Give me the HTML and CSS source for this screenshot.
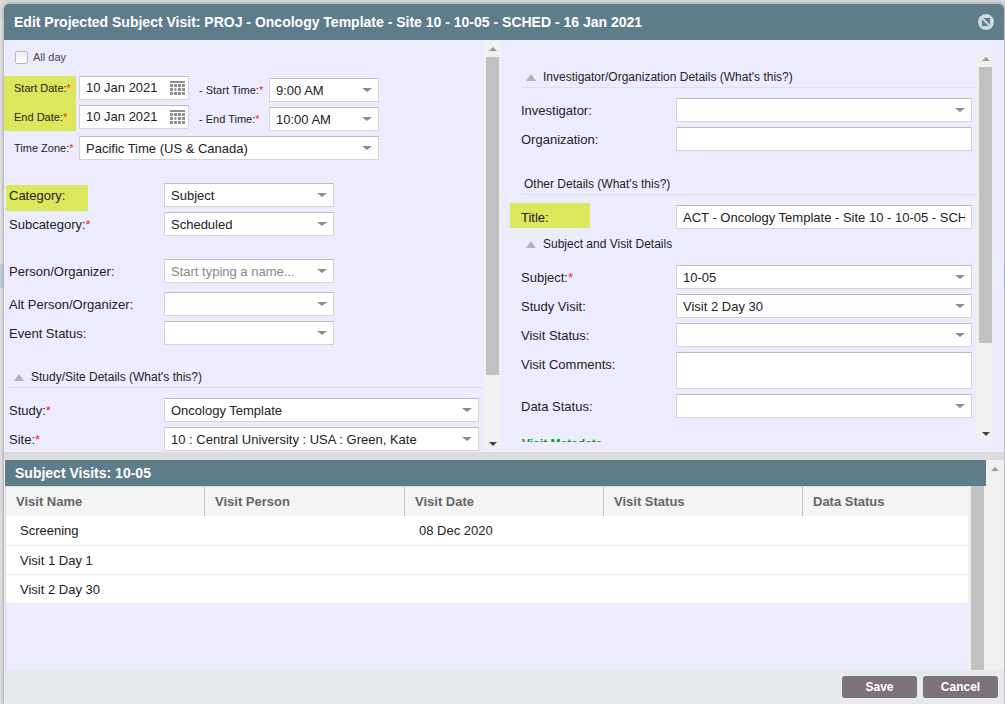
FILE: index.html
```html
<!DOCTYPE html>
<html lang="en">
<head>
<meta charset="utf-8">
<title>Edit Projected Subject Visit</title>
<link rel="stylesheet" href="styles.css">
</head>
<body>
<main class="dialog">
  <header class="dialog-head">
    <h1>Edit Projected Subject Visit: PROJ - Oncology Template - Site 10 - 10-05 - SCHED - 16 Jan 2021</h1>
    <button class="close" type="button" aria-label="Close">
      <svg width="16" height="16" viewBox="0 0 16 16"><circle cx="8" cy="8" r="8" fill="#cfd8dc"/><path d="M4 4h8v8H4z" fill="#5f7c8a"/><path d="M4 4l8 8" stroke="#cfd8dc" stroke-width="2"/></svg>
    </button>
  </header>

  <form class="panes">
    <section class="pane">
      <div class="pane-body">
        <div class="all-day"><input id="allday" type="checkbox"><label for="allday">All day</label></div>
        <div class="when">
          <div class="dates">
            <div class="row small"><label for="sd">Start Date:<b>*</b></label>
              <span class="date"><input id="sd" type="text" value="10 Jan 2021"><button type="button" aria-label="Pick start date"><svg width="15" height="15" viewBox="0 0 15 15" fill="#8f8f8f"><path d="M0 0h15v2H0z"/><path d="M0 3h3v3H0zM4 3h3v3H4zM8 3h3v3H8zM12 3h3v3h-3zM0 7h3v3H0zM5 7h1v1h1v1H6v1H5V9H4V8h1zM8 7h3v3H8zM12 7h3v3h-3zM0 11h3v3H0zM4 11h3v3H4zM8 11h3v3H8zM12 11h3v3h-3z"/></svg></button></span></div>
            <div class="row small"><label for="ed">End Date:<b>*</b></label>
              <span class="date"><input id="ed" type="text" value="10 Jan 2021"><button type="button" aria-label="Pick end date"><svg width="15" height="15" viewBox="0 0 15 15" fill="#8f8f8f"><path d="M0 0h15v2H0z"/><path d="M0 3h3v3H0zM4 3h3v3H4zM8 3h3v3H8zM12 3h3v3h-3zM0 7h3v3H0zM5 7h1v1h1v1H6v1H5V9H4V8h1zM8 7h3v3H8zM12 7h3v3h-3zM0 11h3v3H0zM4 11h3v3H4zM8 11h3v3H8zM12 11h3v3h-3z"/></svg></button></span></div>
          </div>
          <div class="times">
            <div class="row small"><label for="st">- Start Time:<b>*</b></label><span class="pick"><select id="st"><option>9:00 AM</option></select></span></div>
            <div class="row small"><label for="et">- End Time:<b>*</b></label><span class="pick"><select id="et"><option>10:00 AM</option></select></span></div>
          </div>
        </div>
        <div class="row small zone"><label for="tz">Time Zone:<b>*</b></label><span class="pick"><select id="tz"><option>Pacific Time (US &amp; Canada)</option></select></span></div>

        <div class="fields short">
          <div class="row"><label for="cat" class="marked">Category:</label><span class="pick"><select id="cat"><option>Subject</option></select></span></div>
          <div class="row"><label for="sub">Subcategory:<b>*</b></label><span class="pick"><select id="sub"><option>Scheduled</option></select></span></div>
        </div>
        <div class="fields short">
          <div class="row person"><label for="per">Person/Organizer:</label><span class="pick"><input id="per" type="text" placeholder="Start typing a name..."></span></div>
          <div class="row"><label for="alt">Alt Person/Organizer:</label><span class="pick"><select id="alt"><option></option></select></span></div>
          <div class="row"><label for="evs">Event Status:</label><span class="pick"><select id="evs"><option></option></select></span></div>
        </div>
        <h2 class="group study"><i class="fold"></i>Study/Site Details (What's this?)</h2>
        <div class="fields long">
          <div class="row"><label for="stu">Study:<b>*</b></label><span class="pick"><select id="stu"><option>Oncology Template</option></select></span></div>
          <div class="row"><label for="site">Site:<b>*</b></label><span class="pick"><select id="site"><option>10 : Central University : USA : Green, Kate</option></select></span></div>
        </div>
      </div>
      <div class="scroll"><i class="up"></i><div class="track"><div class="thumb left-thumb"></div></div><i class="down"></i></div>
    </section>

    <section class="pane right">
      <div class="pane-body">
        <h2 class="group first"><i class="fold"></i>Investigator/Organization Details (What's this?)</h2>
        <div class="fields">
          <div class="row"><label for="inv">Investigator:</label><span class="pick"><select id="inv"><option></option></select></span></div>
          <div class="row"><label for="org">Organization:</label><input id="org" type="text"></div>
        </div>
        <h2 class="group other">Other Details (What's this?)</h2>
        <div class="fields">
          <div class="row"><label for="ttl" class="marked title">Title:</label><input id="ttl" type="text" value="ACT - Oncology Template - Site 10 - 10-05 - SCHED - 16 Jan 2021"></div>
        </div>
        <h2 class="group subject"><i class="fold"></i>Subject and Visit Details</h2>
        <div class="fields">
          <div class="row"><label for="sbj">Subject:<b>*</b></label><span class="pick"><select id="sbj"><option>10-05</option></select></span></div>
          <div class="row"><label for="sv">Study Visit:</label><span class="pick"><select id="sv"><option>Visit 2 Day 30</option></select></span></div>
          <div class="row"><label for="vs">Visit Status:</label><span class="pick"><select id="vs"><option></option></select></span></div>
          <div class="row"><label for="vc">Visit Comments:</label><textarea id="vc"></textarea></div>
          <div class="row"><label for="ds">Data Status:</label><span class="pick"><select id="ds"><option></option></select></span></div>
        </div>
        <h3 class="meta">Visit Metadata</h3>
      </div>
      <div class="scroll"><i class="up"></i><div class="track"><div class="thumb right-thumb"></div></div><i class="down"></i></div>
    </section>
  </form>

  <div class="splitter"></div>

  <section class="visits">
    <div class="visits-main">
      <h2 class="visits-head">Subject Visits: 10-05</h2>
      <div class="visits-body">
        <div class="table-wrap">
          <table>
            <colgroup><col class="c"><col class="c wide"><col class="c"><col class="c"><col></colgroup>
            <thead><tr><th>Visit Name</th><th>Visit Person</th><th>Visit Date</th><th>Visit Status</th><th>Data Status</th></tr></thead>
            <tbody>
              <tr><td>Screening</td><td></td><td>08 Dec 2020</td><td></td><td></td></tr>
              <tr><td>Visit 1 Day 1</td><td></td><td></td><td></td><td></td></tr>
              <tr><td>Visit 2 Day 30</td><td></td><td></td><td></td><td></td></tr>
            </tbody>
          </table>
        </div>
        <div class="inner-scroll"></div>
      </div>
    </div>
    <div class="scroll outer"><i class="up"></i></div>
  </section>

  <footer class="actions">
    <button type="button">Save</button>
    <button type="button">Cancel</button>
  </footer>
</main>
</body>
</html>
```
FILE: styles.css
```css
* { box-sizing: border-box; }

body {
  margin: 0;
  height: 100vh;
  display: flex;
  overflow: hidden;
  padding: 4px 1px 0 4px;
  font: 13px/16px "Liberation Sans", Arial, sans-serif;
  color: #222;
  background: linear-gradient(#d8dcdf 0 18px, #e3e3e3 18px 264px, #c3d3dc 264px 288px, #e3e3e3 288px);
}

h1, h2, h3 { margin: 0; }

input, select, textarea, button { font: inherit; color: inherit; }

.dialog {
  flex: 1;
  min-width: 0;
  display: flex;
  flex-direction: column;
  border-radius: 5px 5px 0 0;
  overflow: hidden;
  background: #edecff;
  box-shadow: 0 0 4px #888;
}

.dialog-head {
  flex: 0 0 36px;
  display: flex;
  align-items: center;
  justify-content: space-between;
  padding: 0 10px;
  background: #5f7c8a;
  color: #fff;
}
.dialog-head h1 { font-size: 14px; line-height: 16px; white-space: nowrap; }
.close { border: 0; padding: 0; background: none; display: flex; }

.panes {
  flex: 412 1 0;
  min-height: 0;
  display: grid;
  grid-template-columns: 497fr 503fr;
  grid-template-rows: minmax(0, 1fr);
}
.pane { display: flex; min-width: 0; min-height: 0; }
.pane-body { flex: 1; min-width: 0; overflow: hidden; position: relative; z-index: 0; }
.right { padding: 10px 10px 10px 0; }

.all-day { display: flex; align-items: center; gap: 5px; padding: 11px 0 12px 11px; font-size: 11px; line-height: 13px; color: #444; }
.all-day input {
  appearance: none;
  margin: 0;
  width: 13px;
  height: 13px;
  border: 1px solid #b8b8b8;
  border-radius: 2px;
  background: linear-gradient(#eee, #fff);
}

.row { display: flex; min-height: 24px; }
.row label { flex: 0 0 155px; padding-top: 1px; line-height: 24px; white-space: nowrap; }
.row b { color: #f22; font-weight: normal; }
.row.small { height: 24px; }
.row.small label { flex-basis: 65px; padding-top: 0; font-size: 11px; }
.fields .row label { height: 24px; }

.when { display: flex; gap: 10px; }
.dates, .times { display: flex; flex-direction: column; gap: 5px; }
.dates { padding-left: 10px; position: relative; }
.dates::before { content: ""; position: absolute; z-index: -1; left: 0; top: 0; width: 72px; height: 55px; background: #dce85b; }
.times { padding-top: 2px; }
.times .row.small label { flex-basis: 70px; }
.times .pick, .date { width: 110px; }
.zone { margin: 5px 0 0 10px; }
.zone .pick { width: 300px; }

.fields { display: flex; flex-direction: column; gap: 5px; padding-left: 5px; }
.short { margin-top: 23px; }
.short .pick { flex: 0 0 170px; }
.person { margin-bottom: 4px; }
.long { padding-right: 5px; }
.right .fields { padding: 0 5px 0 20px; }
.long .pick, .right .pick, .right input, textarea { flex: 1; min-width: 0; }

.marked { position: relative; }
.marked::before { content: ""; position: absolute; z-index: -1; left: -3px; top: 2px; width: 82px; height: 26px; background: #dce85b; }
.marked.title::before { left: -11px; top: -2px; width: 80px; height: 25px; }

.row input, select, textarea {
  height: 24px;
  width: 100%;
  margin: 0;
  padding: 0 6px;
  border: 1px solid #d5d5d5;
  border-top-color: #bcbcbc;
  border-radius: 0;
  background: #fff;
  appearance: none;
  outline: 0;
}
select { padding-top: 1px; }
.date input { padding-bottom: 1px; }
textarea { height: 37px; resize: none; }
input::placeholder { color: #888; opacity: 1; }

.pick, .date { position: relative; display: flex; height: 24px; }
.pick::after {
  content: "";
  position: absolute;
  right: 7px;
  top: 10px;
  border: solid transparent;
  border-width: 4px 5px 0;
  border-top-color: #8c8c8c;
}
.date button { position: absolute; right: 4px; top: 5px; border: 0; padding: 0; background: none; display: flex; }

.group {
  display: flex;
  align-items: center;
  height: 19px;
  margin: 0 0 10px 5px;
  padding-bottom: 2px;
  border-bottom: 1px solid #dfdfe6;
  font-size: 12px;
  font-weight: normal;
}
.fold { margin: 0 7px 0 5px; border: solid transparent; border-width: 0 5px 7px; border-bottom-color: #b3b3b5; }
.study { margin-top: 24px; }
.right .group { margin-left: 20px; }
.right .first { margin-top: 19px; }
.right .other { margin-top: 25px; padding-left: 3px; }
.right .subject { margin-top: 7px; border-color: transparent; }
.meta { margin: 19px 0 0 21px; font-size: 12px; line-height: 14px; color: #0a9a0a; }

.scroll { flex: 0 0 17px; display: flex; flex-direction: column; align-items: center; background: #f0f0f0; }
.up, .down { flex: 0 0 17px; display: flex; align-items: center; }
.up::after, .down::after { content: ""; border: solid transparent; }
.up::after { border-width: 0 4px 4px; border-bottom-color: #999; }
.down::after { border-width: 4px 4px 0; border-top-color: #444; }
.track { flex: 1; width: 13px; }
.thumb { background: #c1c1c1; }
.left-thumb { height: 84%; }
.right-thumb { height: 77%; }

.splitter { flex: 0 0 8px; background: #dcdcdc; }

.visits { flex: 210 1 0; min-height: 0; display: flex; padding: 0 1px; }
.visits-main { flex: 1; min-width: 0; display: flex; flex-direction: column; }
.visits-head { flex: 0 0 26px; padding-left: 10px; font-size: 14px; line-height: 26px; background: #5f7c8a; color: #fff; }
.visits-body { flex: 1; min-height: 0; display: flex; border-left: 1px solid #dadae6; }
.table-wrap { flex: 1; min-width: 0; overflow: hidden; }
.inner-scroll { flex: 0 0 18px; border: solid #f0f0f0; border-width: 0 2px 0 3px; background: #c1c1c1; }

table { width: 100%; table-layout: fixed; border-collapse: separate; border-spacing: 0; }
.c { width: 199px; }
.wide { width: 200px; }
th {
  height: 30px;
  padding: 0 10px;
  text-align: left;
  color: #666;
  background: #f4f4f4;
  border-top: 1px solid #ddd;
  border-right: 1px solid #c0c0c0;
}
th:last-child { border-right: 0; }
td { height: 29px; padding: 1px 14px 0; background: #fff; border-bottom: 1px solid #ebebeb; }
tbody tr:first-child td { height: 30px; }

.actions { flex: 0 0 34px; display: flex; justify-content: flex-end; gap: 6px; padding: 6px 6px 6px 0; background: #e6eaed; }
.actions button { width: 75px; border: 0; border-radius: 3px; background: #7b727a; color: #fff; font-size: 12px; font-weight: bold; }
```
